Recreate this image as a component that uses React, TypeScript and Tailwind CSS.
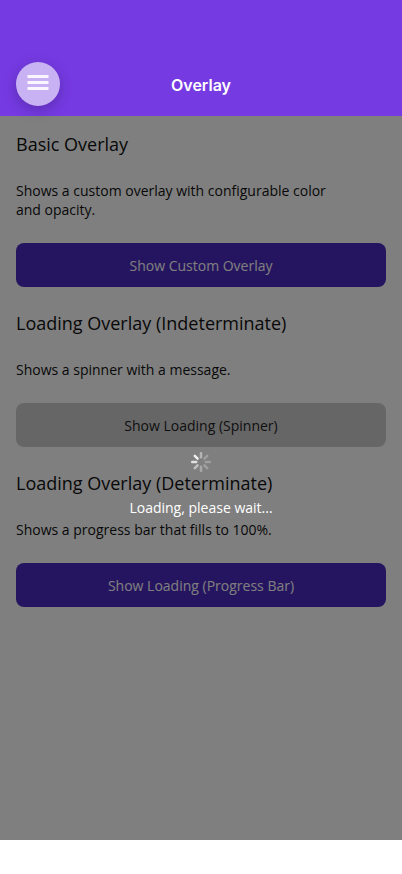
import React from 'react';

const Section: React.FC<{ title: string; body: string; action: string; disabled?: boolean }> = ({ title, body, action, disabled }) => (
  <section className="flex flex-col">
    <h2 className="text-[18px] leading-[25px] text-[#111111]">{title}</h2>
    <p className="mt-[24px] w-[330px] text-[14px] leading-[19px] text-[#111111]">{body}</p>
    <button
      className={`mt-[24px] h-[44px] w-full rounded-[8px] text-[14px] ${
        disabled ? 'bg-[#cccccc] text-[#222222]' : 'bg-[#4a2ac0] text-white'
      }`}
    >
      {action}
    </button>
  </section>
);

export default function App() {
  return (
    <div className="flex h-[874px] w-[402px] flex-col bg-white font-['Open_Sans',sans-serif]">
      <header className="relative z-20 flex h-[116px] shrink-0 items-end justify-center bg-[#753ae2] pb-[21px]">
        <h1 className="font-['Inter',sans-serif] text-[16px] font-semibold leading-[20px] text-white">Overlay</h1>
        <button className="absolute left-[16px] top-[62px] flex h-[44px] w-[44px] items-center justify-center rounded-full bg-[#c9b2f3] shadow-[0_4px_14px_rgba(0,0,0,0.22)]">
          <svg width="22" height="18" viewBox="0 0 22 18" fill="none" stroke="#fbf5ff" strokeWidth="3">
            <path d="M0.5 1.5h21M0.5 7.5h21M0.5 13.5h21" />
          </svg>
        </button>
      </header>

      <main className="relative flex h-[724px] flex-col">
        <div className="flex flex-col gap-[24px] px-[16px] pt-[16px]">
          <Section title="Basic Overlay" body="Shows a custom overlay with configurable color and opacity." action="Show Custom Overlay" />
          <Section title="Loading Overlay (Indeterminate)" body="Shows a spinner with a message." action="Show Loading (Spinner)" disabled />
          <Section title="Loading Overlay (Determinate)" body="Shows a progress bar that fills to 100%." action="Show Loading (Progress Bar)" />
        </div>

        <div className="absolute inset-0 flex flex-col items-center justify-center bg-black/50 pt-[14px]">
          <svg width="20" height="20" viewBox="0 0 20 20" fill="none" strokeWidth="2.5" strokeLinecap="round">
            <path d="M10 1.2v4" stroke="#b5b5b5" />
            <path d="M16.2 3.8l-2.8 2.8" stroke="#a0a0a0" />
            <path d="M18.8 10h-4" stroke="#a0a0a0" />
            <path d="M16.2 16.2l-2.8-2.8" stroke="#a0a0a0" />
            <path d="M10 18.8v-4" stroke="#a8a8a8" />
            <path d="M3.8 16.2l2.8-2.8" stroke="#c0c0c0" />
            <path d="M1.2 10h4" stroke="#e0e0e0" />
            <path d="M3.8 3.8l2.8 2.8" stroke="#f0f0f0" />
          </svg>
          <p className="mt-[26px] text-[14px] leading-[20px] text-white">Loading, please wait...</p>
        </div>
      </main>
    </div>
  );
}
